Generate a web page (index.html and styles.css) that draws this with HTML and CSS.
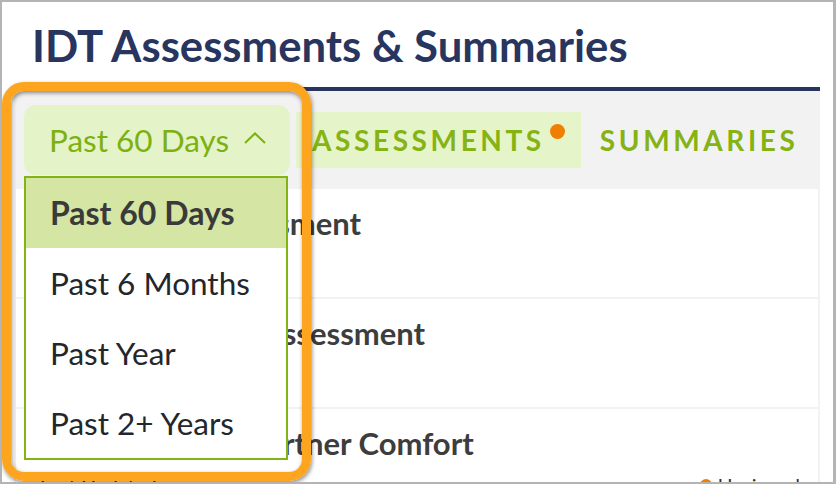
FILE: index.html
```html
<!DOCTYPE html>
<html lang="en">
<head>
    <meta charset="UTF-8">
    <meta name="viewport" content="width=device-width, initial-scale=1.0">
    <title>IDT Assessments &amp; Summaries</title>
    <link rel="stylesheet" href="styles.css">
</head>
<body>
    <div class="screen">
        <h1 class="page-title">IDT Assessments &amp; Summaries</h1>

        <div class="panel">
            <div class="tab-bar">
                <div class="filter">
                    <button class="filter-button">
                        <span>Past 60 Days</span>
                        <svg class="chevron" width="22" height="12" viewBox="0 0 22 12">
                            <polyline points="1,11 11,1.5 21,11" fill="none" stroke="#7db111" stroke-width="2"/>
                        </svg>
                    </button>
                    <ul class="filter-menu">
                        <li class="selected">Past 60 Days</li>
                        <li>Past 6 Months</li>
                        <li>Past Year</li>
                        <li>Past 2+ Years</li>
                    </ul>
                </div>
                <div class="tab active">Assessments<span class="dot"></span></div>
                <div class="tab">Summaries</div>
            </div>

            <div class="rows">
                <div class="row">
                    <div class="row-title">Nutritional Assessment</div>
                </div>
                <div class="row">
                    <div class="row-title">Comprehensive Assessment</div>
                </div>
                <div class="row">
                    <div class="row-title">Patient &amp; Care Partner Comfort</div>
                    <div class="row-meta">
                        <span>Last Updated</span>
                        <span class="status"><span class="status-dot"></span>Unsigned</span>
                    </div>
                </div>
            </div>
        </div>

        <!-- annotation highlight around the filter -->
        <div class="callout"></div>
    </div>
</body>
</html>
```

FILE: styles.css
```css
body {
    margin: 0;
    font-family: Lato, 'Liberation Sans', sans-serif;
}

.screen {
    position: relative;
    width: 836px;
    height: 484px;
    box-sizing: border-box;
    border: 2px solid #b4b4b4;
    border-right-width: 3px;
    padding: 0 13px 0 12px;
    background: #fff;
    overflow: hidden;
}

.page-title {
    margin: 0;
    padding: 17px 0 16px 18px;
    font-size: 43.7px;
    line-height: 1.2;
    font-weight: 700;
    color: #27355f;
    border-bottom: 4px solid #27355f;
}

.panel {
    background: #f2f2f2;
    padding: 0 2px;
}

.tab-bar {
    display: flex;
    align-items: center;
    padding: 14px 0 14px 8px;
}

.filter {
    position: relative;
}

.filter-button {
    display: flex;
    align-items: center;
    justify-content: space-between;
    width: 266px;
    height: 70px;
    padding: 0 24px 0 25px;
    border: none;
    border-radius: 12px;
    background: #e5f3c8;
    color: #7db111;
    font-family: inherit;
    font-size: 31.5px;
}

.chevron {
    margin-top: -4px;
}

.filter-menu {
    position: absolute;
    top: 71px;
    left: 0;
    z-index: 2;
    width: 264px;
    box-sizing: border-box;
    margin: 0;
    padding: 0;
    list-style: none;
    background: #fff;
    border: 2px solid #84b414;
}

.filter-menu li {
    height: 70px;
    line-height: 70px;
    padding-left: 24px;
    font-size: 31.5px;
    color: #23272c;
}

.filter-menu li.selected {
    background: #d4e5a4;
    font-size: 32px;
    font-weight: 700;
    color: #3a3a3a;
}

.tab {
    position: relative;
    height: 56px;
    line-height: 56px;
    padding: 0 18px 0 19px;
    font-size: 28px;
    font-weight: 700;
    letter-spacing: 3.6px;
    text-transform: uppercase;
    color: #85b314;
}

.tab.active {
    background: #e6f4c9;
    margin-left: 6px;
    padding: 0 36px 0 16px;
}

.dot {
    position: absolute;
    top: 12px;
    right: 16px;
    width: 15px;
    height: 15px;
    border-radius: 50%;
    background: #f07e00;
}

.rows {
    display: flex;
    flex-direction: column;
    gap: 2px;
}

.row {
    height: 108px;
    box-sizing: border-box;
    padding: 16px 18px 0 24px;
    background: #fff;
}

.row-title {
    font-size: 31px;
    line-height: 1.2;
    font-weight: 700;
    color: #3d3d3d;
}

.row-meta {
    display: flex;
    justify-content: space-between;
    margin-top: 10px;
    font-size: 20px;
    line-height: 1.2;
    color: #333;
}

.status {
    display: flex;
    align-items: center;
    gap: 6px;
}

.status-dot {
    width: 12px;
    height: 12px;
    border-radius: 50%;
    background: #f07e00;
}

.callout {
    position: absolute;
    top: 80px;
    left: 0;
    z-index: 3;
    width: 309px;
    height: 399px;
    box-sizing: border-box;
    border: 9px solid #fea51f;
    border-radius: 22px;
    box-shadow: 1px 2px 4px rgba(0, 0, 0, 0.45), inset 1px 2px 4px rgba(0, 0, 0, 0.45);
}
```
